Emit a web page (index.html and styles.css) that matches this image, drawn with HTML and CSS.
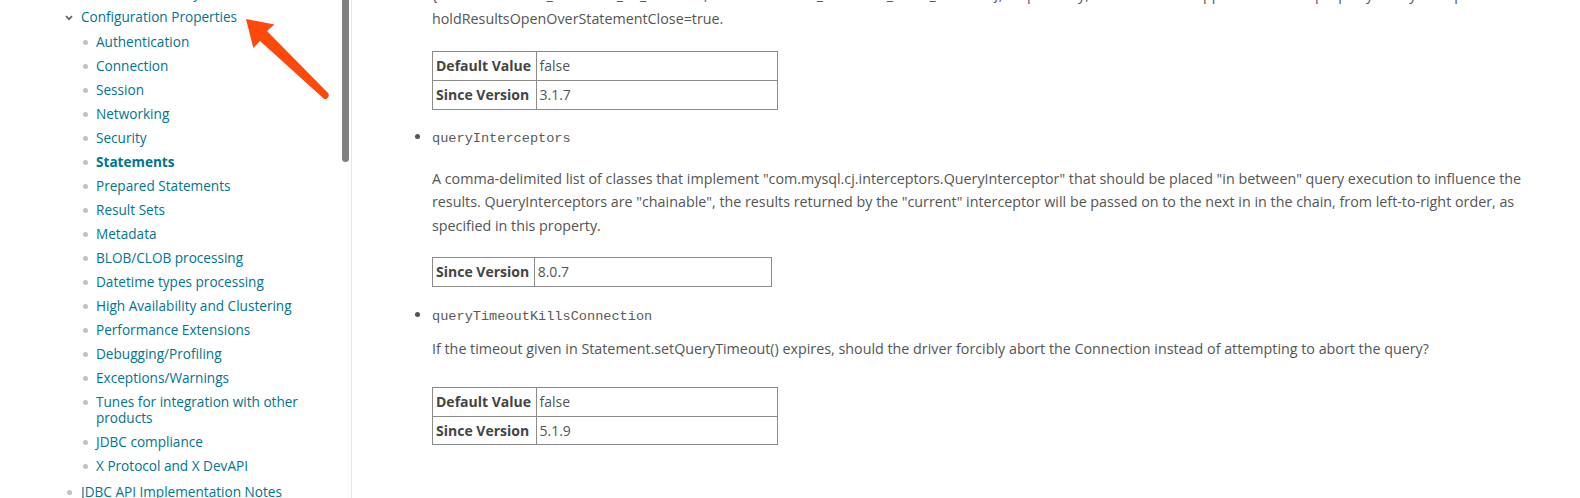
FILE: index.html
```html
<!DOCTYPE html>
<html lang="en">
<head>
<meta charset="utf-8">
<title>Configuration Properties - Statements</title>
<link rel="stylesheet" href="styles.css">
</head>
<body>
<div class="page">
  <nav class="toc">
    <ul class="toc-l1">
      <li class="l1 dot"><a href="#">Connection URL Syntax</a></li>
      <li class="l1 open">
        <a href="#"><svg class="chev" width="8" height="6" viewBox="0 0 8 6"><path d="M1 1.2 L4 4.2 L7 1.2" fill="none" stroke="#666" stroke-width="1.8"/></svg>Configuration Properties</a>
        <ul class="toc-l2">
          <li><a href="#">Authentication</a></li>
          <li><a href="#">Connection</a></li>
          <li><a href="#">Session</a></li>
          <li><a href="#">Networking</a></li>
          <li><a href="#">Security</a></li>
          <li class="current"><a href="#">Statements</a></li>
          <li><a href="#">Prepared Statements</a></li>
          <li><a href="#">Result Sets</a></li>
          <li><a href="#">Metadata</a></li>
          <li><a href="#">BLOB/CLOB processing</a></li>
          <li><a href="#">Datetime types processing</a></li>
          <li><a href="#">High Availability and Clustering</a></li>
          <li><a href="#">Performance Extensions</a></li>
          <li><a href="#">Debugging/Profiling</a></li>
          <li><a href="#">Exceptions/Warnings</a></li>
          <li><a href="#">Tunes for integration with other products</a></li>
          <li><a href="#">JDBC compliance</a></li>
          <li><a href="#">X Protocol and X DevAPI</a></li>
        </ul>
      </li>
      <li class="l1 dot"><a href="#">JDBC API Implementation Notes</a></li>
    </ul>
    <div class="thumb"></div>
    <svg class="arrow" width="100" height="110" viewBox="0 0 100 110">
      <path d="M6 19 L34.5 24.5 L27 31 L88.5 93.5 Q89.5 97.5 86.5 99 Q84 99.5 82.5 97.5 L20 41 L13.3 48 Z" fill="#fd4a0c"/>
    </svg>
  </nav>
  <main class="content">
    <ul class="props">
      <li class="prop cont">
        <p class="desc first">{ResultSet.CLOSE_CURSORS_AT_COMMIT, ResultSet.HOLD_CURSORS_OVER_COMMIT}, respectively, to override the application of the property set by the option<br>holdResultsOpenOverStatementClose=true.</p>
        <table class="kv t-wide">
          <tr><th>Default Value</th><td>false</td></tr>
          <tr><th>Since Version</th><td>3.1.7</td></tr>
        </table>
      </li>
      <li class="prop">
        <code>queryInterceptors</code>
        <p class="desc">A comma-delimited list of classes that implement "com.mysql.cj.interceptors.QueryInterceptor" that should be placed "in between" query execution to influence the results. QueryInterceptors are "chainable", the results returned by the "current" interceptor will be passed on to the next in in the chain, from left-to-right order, as specified in this property.</p>
        <table class="kv t-narrow">
          <tr><th>Since Version</th><td>8.0.7</td></tr>
        </table>
      </li>
      <li class="prop">
        <code>queryTimeoutKillsConnection</code>
        <p class="desc tight">If the timeout given in Statement.setQueryTimeout() expires, should the driver forcibly abort the Connection instead of attempting to abort the query?</p>
        <table class="kv t-wide">
          <tr><th>Default Value</th><td>false</td></tr>
          <tr><th>Since Version</th><td>5.1.9</td></tr>
        </table>
      </li>
    </ul>
  </main>
</div>
</body>
</html>
```
FILE: styles.css
```css
* { box-sizing: border-box; }
html, body { margin: 0; padding: 0; background: #fff; }
body {
  width: 1580px;
  height: 498px;
  overflow: hidden;
  font-family: "Open Sans", "Liberation Sans", sans-serif;
}
.page {
  display: flex;
  height: 498px;
}
.toc {
  position: relative;
  width: 352px;
  flex: none;
  border-right: 1px solid #e6e6e6;
  font-size: 13.6px;
}
.toc ul { list-style: none; margin: 0; padding: 0; }
.toc .toc-l1 { margin-top: -19px; }
.toc a {
  display: block;
  color: #00758f;
  text-decoration: none;
  line-height: 16px;
  padding: 4px 0;
  position: relative;
}
.l1 > a { padding-left: 81px; }
.l1.dot > a::before,
.toc-l2 a::before {
  content: "";
  position: absolute;
  width: 5px;
  height: 5px;
  border-radius: 50%;
  background: #c2c2c2;
  top: 10px;
}
.l1.dot > a::before { left: 67px; }
.toc .toc-l2 { margin: 1px 0 2px; }
.toc-l2 a { padding-left: 96px; padding-right: 40px; }
.toc-l2 a::before { left: 83px; }
.toc-l2 .current a { font-weight: 700; }
.chev { position: absolute; left: 65px; top: 10px; }
.thumb {
  position: absolute;
  right: 2px;
  top: 0;
  width: 7px;
  height: 162px;
  background: #808080;
  border-radius: 0 0 3.5px 3.5px;
}
.arrow { position: absolute; left: 240px; top: 0; }

.content {
  flex: 1;
  padding-right: 36px;
  color: #555;
  font-size: 14.3px;
}
.props {
  margin: 0;
  padding: 0 0 0 80px;
  list-style: disc;
}
.prop { line-height: 24px; }
.prop.cont { list-style: none; }
.prop code {
  font-family: "Liberation Mono", "Courier New", monospace;
  font-size: 13.6px;
  color: #5a5a5a;
}
.desc { margin: 16px 0 20px; line-height: 23.6px; }
.desc.first { margin-top: -17px; margin-bottom: 20px; line-height: 24px; }
.desc.tight { margin-top: 8px; margin-bottom: 26px; }
.kv {
  border-collapse: collapse;
  margin-bottom: 15px;
  font-size: 14px;
}
.kv th, .kv td {
  border: 1px solid #8c8c8c;
  padding: 4px 3px;
  line-height: 19.8px;
  text-align: left;
}
.kv th { font-weight: 700; color: #444; white-space: nowrap; }
.kv td { color: #555; }
.t-wide { width: 346px; }
.t-narrow { width: 340px; margin-bottom: 16px; }
.kv th { width: 30%; }
```
